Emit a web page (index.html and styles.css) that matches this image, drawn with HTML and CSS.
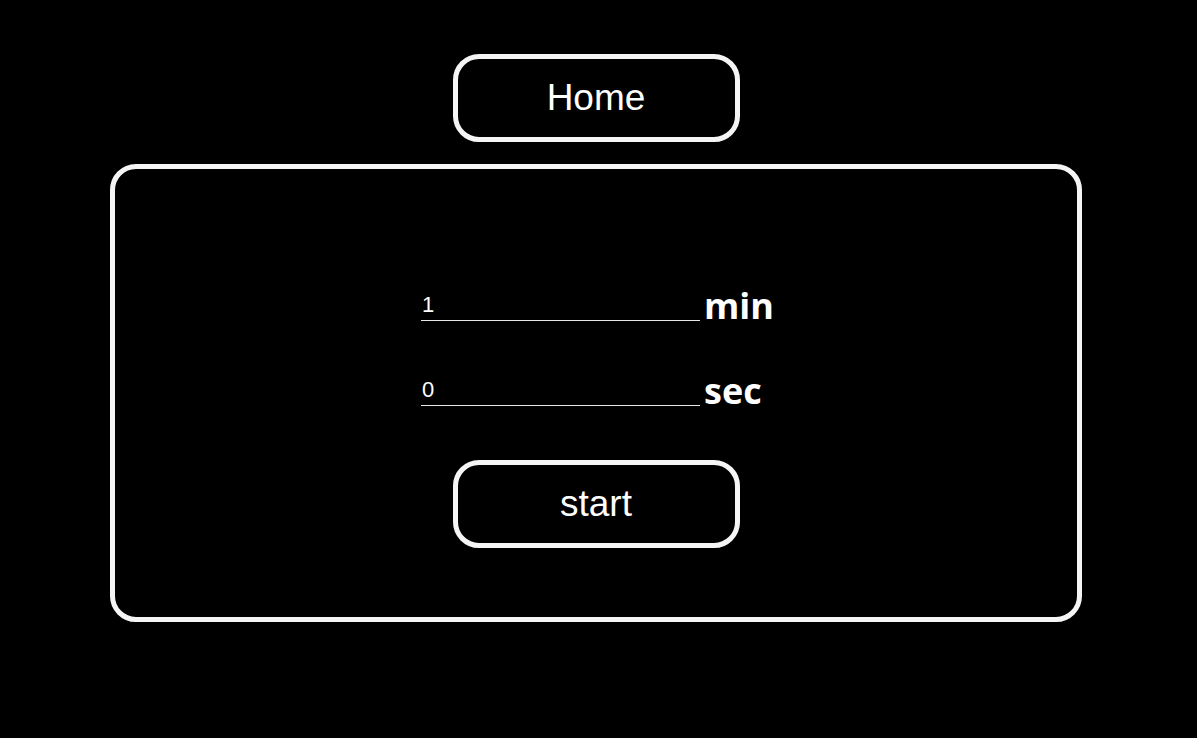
FILE: index.html
```html
<!DOCTYPE html>
<html lang="en">
<head>
<meta charset="utf-8">
<title>Timer</title>
<link rel="stylesheet" href="styles.css">
</head>
<body>
<main class="page">
  <button class="btn btn-home" type="button">Home</button>
  <section class="panel">
    <div class="row">
      <input class="field" type="text" value="1">
      <span class="unit">min</span>
    </div>
    <div class="row row-sec">
      <input class="field" type="text" value="0">
      <span class="unit">sec</span>
    </div>
    <button class="btn btn-start" type="button">start</button>
  </section>
</main>
</body>
</html>
```
FILE: styles.css
```css
html, body {
  margin: 0;
  padding: 0;
  background: #000;
}

body {
  font-family: "Liberation Sans", Arial, sans-serif;
  color: #fff;
}

.page {
  display: flex;
  flex-direction: column;
  align-items: center;
  padding: 54px 5px 0 0;
}

.btn {
  box-sizing: border-box;
  width: 287px;
  height: 88px;
  border: 5px solid #f5f5f5;
  border-radius: 26px;
  background: #000;
  color: #fff;
  font-family: "Liberation Sans", Arial, sans-serif;
  font-size: 37px;
  padding: 0;
  cursor: pointer;
}

.panel {
  box-sizing: border-box;
  width: 972px;
  height: 458px;
  margin-top: 22px;
  border: 5px solid #f5f5f5;
  border-radius: 26px;
  display: flex;
  flex-direction: column;
  align-items: center;
  padding-top: 124px;
}

.row {
  display: flex;
  align-items: flex-end;
  height: 28px;
}

.row-sec {
  margin-top: 57px;
}

.field {
  box-sizing: border-box;
  width: 279px;
  height: 28px;
  padding: 0 1px 4px;
  margin: 0;
  background: transparent;
  border: none;
  border-bottom: 1px solid #e8e8e8;
  color: #fff;
  font-family: "Liberation Sans", Arial, sans-serif;
  font-size: 22px;
  outline: none;
  flex: none;
}

.unit {
  font-family: "Open Sans", "Noto Sans", sans-serif;
  font-weight: 700;
  font-size: 36px;
  line-height: 1;
  margin-left: 4px;
  margin-bottom: -3px;
  width: 67px;
  white-space: nowrap;
  flex: none;
}

.btn-start {
  margin-top: 54px;
}
```
